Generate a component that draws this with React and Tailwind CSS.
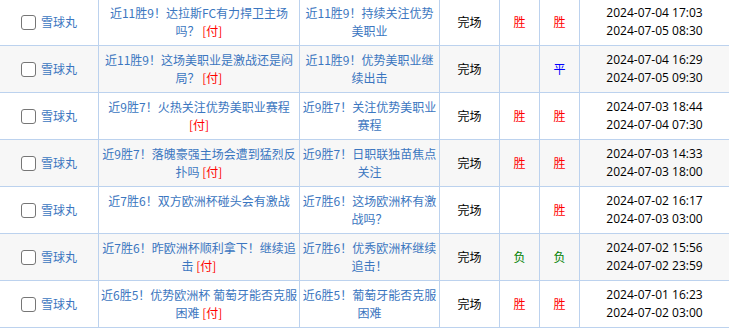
const rows = [
  {
    title: "近11胜9！达拉斯FC有力捍卫主场吗？",
    paid: true,
    free: "近11胜9！持续关注优势美职业",
    r1: "胜",
    r2: "胜",
    t1: "2024-07-04 17:03",
    t2: "2024-07-05 08:30",
  },
  {
    title: "近11胜9！这场美职业是激战还是闷局？",
    paid: true,
    free: "近11胜9！优势美职业继续出击",
    r1: "",
    r2: "平",
    t1: "2024-07-04 16:29",
    t2: "2024-07-05 09:30",
  },
  {
    title: "近9胜7！火热关注优势美职业赛程",
    paid: true,
    free: "近9胜7！关注优势美职业赛程",
    r1: "胜",
    r2: "胜",
    t1: "2024-07-03 18:44",
    t2: "2024-07-04 07:30",
  },
  {
    title: "近9胜7！落魄豪强主场会遭到猛烈反扑吗",
    paid: true,
    free: "近9胜7！日职联独苗焦点关注",
    r1: "胜",
    r2: "胜",
    t1: "2024-07-03 14:33",
    t2: "2024-07-03 18:00",
  },
  {
    title: "近7胜6！双方欧洲杯碰头会有激战",
    paid: false,
    free: "近7胜6！这场欧洲杯有激战吗？",
    r1: "",
    r2: "胜",
    t1: "2024-07-02 16:17",
    t2: "2024-07-03 03:00",
  },
  {
    title: "近7胜6！昨欧洲杯顺利拿下！继续追击",
    paid: true,
    free: "近7胜6！优秀欧洲杯继续追击！",
    r1: "负",
    r2: "负",
    t1: "2024-07-02 15:56",
    t2: "2024-07-02 23:59",
  },
  {
    title: "近6胜5！优势欧洲杯 葡萄牙能否克服困难",
    paid: true,
    free: "近6胜5！葡萄牙能否克服困难",
    r1: "胜",
    r2: "胜",
    t1: "2024-07-01 16:23",
    t2: "2024-07-02 03:00",
  },
];

const resultColor = {
  胜: "text-[#ff0000]",
  平: "text-[#0000ff]",
  负: "text-[#008000]",
};

function Result({ value }) {
  return <span className={resultColor[value] || ""}>{value}</span>;
}

function Row({ row, index }) {
  const bg = index % 2 === 1 ? "bg-[#f7f7f7]" : "bg-white";
  const cell = "flex items-center justify-center border-r border-[#bcd2ee] text-center";
  return (
    <div className={`grid grid-cols-[99px_201px_140px_60px_40px_40px_1fr] h-[47px] border-b border-[#bcd2ee] ${bg}`}>
      <div className={`${cell} gap-[5px]`}>
        <span className="w-[15px] h-[15px] border border-[#767676] rounded-[3px] bg-white" />
        <span className="text-[#3b76c0]">雪球丸</span>
      </div>
      <div className={`${cell} px-px text-[#3b76c0]`}>
        <p>
          {row.title}
          {row.paid && (
            <>
              {" "}
              <span className="text-[#ff0000]">[付]</span>
            </>
          )}
          {!row.paid && (
            <>
              <br />
              &nbsp;
            </>
          )}
        </p>
      </div>
      <div className={`${cell} px-[2px] text-[#3b76c0]`}>
        <p>{row.free}</p>
      </div>
      <div className={`${cell} text-black`}>完场</div>
      <div className={cell}>
        <Result value={row.r1} />
      </div>
      <div className={cell}>
        <Result value={row.r2} />
      </div>
      <div className="flex flex-col items-center justify-center text-black font-['Open_Sans','Noto_Sans_CJK_SC',sans-serif]">
        <span>{row.t1}</span>
        <span>{row.t2}</span>
      </div>
    </div>
  );
}

export default function App() {
  return (
    <div className="w-[729px] h-[328px] overflow-hidden bg-white font-['Noto_Sans_CJK_SC','Noto_Sans',sans-serif] text-[12px] leading-[18px]">
      <div className="-mt-px">
        {rows.map((row, i) => (
          <Row key={i} row={row} index={i} />
        ))}
      </div>
    </div>
  );
}
